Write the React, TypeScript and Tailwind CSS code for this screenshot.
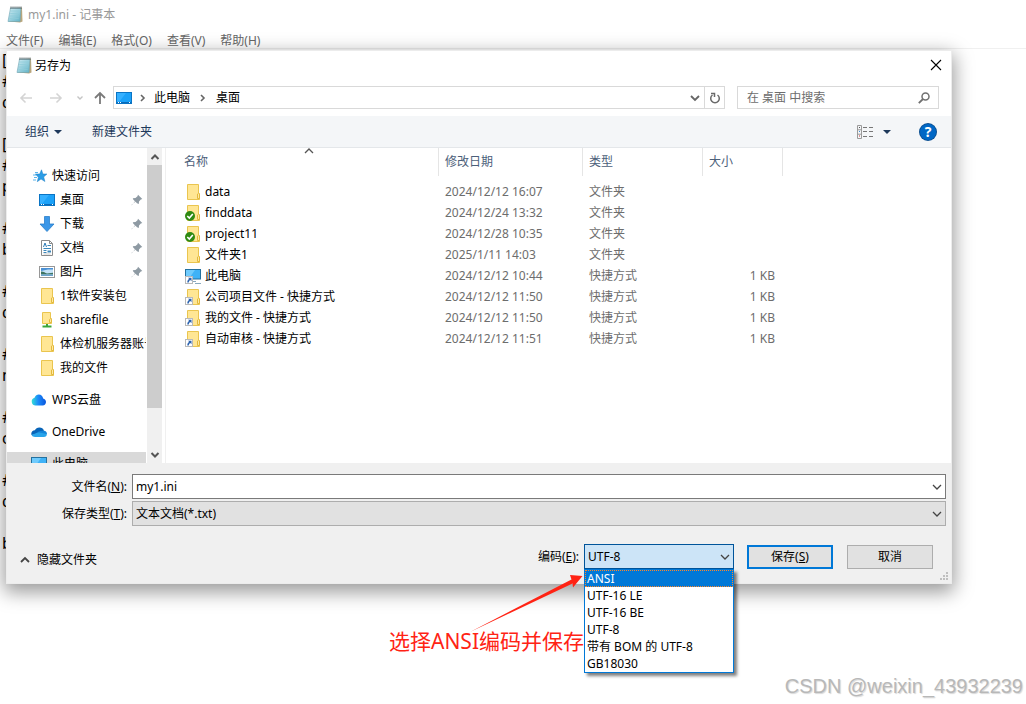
import React from "react";

type SvgProps = { children: React.ReactNode; w?: number; h?: number; className?: string };

function Svg({ children, w = 16, h = 16, className = "" }: SvgProps) {
  return (
    <svg width={w} height={h} viewBox={`0 0 ${w} ${h}`} fill="none" aria-hidden="true" className={`shrink-0 ${className}`}>
      {children}
    </svg>
  );
}

function Notepad() {
  return (
    <Svg w={16} h={17}>
      <defs>
        <linearGradient id="pad" x1="0" y1="0" x2="1" y2="1">
          <stop offset="0" stopColor="#d3eef5" />
          <stop offset="1" stopColor="#5fb2c6" />
        </linearGradient>
      </defs>
      <path d="M4 2.5 15 1.5 15.5 15.5 13 16.5 2 15.5Z" fill="#b9a67c" />
      <path d="M3.5 2H14L13 15.5H1Z" fill="url(#pad)" stroke="#6fa5b3" strokeWidth=".6" />
      <path d="M3.5 5h9M3.2 7.5h9M3 10h9M2.6 12.5h9" stroke="#8ecbd9" strokeWidth=".7" />
      <path d="M4 .5v2.500M6 .5v2.500M8 .5v2.500M10 .5v2.500M12 .5v2.500M14 .5v2.500" stroke="#4d5a5e" strokeWidth=".9" />
    </Svg>
  );
}

function FolderShape() {
  return (
    <>
      <path d="M2.500 .5h11v9h1v6h-12z" fill="#ffe694" stroke="#eac54f" />
      <path d="M12.500 14.500v-4.500l1-.8 1 .8v4.500z" fill="#ffe9a2" stroke="#e3b93d" />
    </>
  );
}

function Folder() {
  return (
    <Svg>
      <FolderShape />
    </Svg>
  );
}

function CheckedFolder() {
  return (
    <Svg>
      <FolderShape />
      <circle cx="5" cy="11" r="5" fill="#2f8a12" />
      <path d="m2.300 11 2 2 3.500-4" stroke="#fff" strokeWidth="1.600" />
    </Svg>
  );
}

function LinkBadge() {
  return (
    <>
      <rect x=".5" y="8.500" width="7" height="7" fill="#fff" stroke="#b9b9b9" />
      <path d="M3 9.800h3.500v3.500L5.300 12.100C4.200 13 3.800 13.500 3.800 14.600H2.300c0-2 .6-2.800 1.900-3.600z" fill="#2b62ae" />
    </>
  );
}

function LinkedFolder() {
  return (
    <Svg>
      <FolderShape />
      <LinkBadge />
    </Svg>
  );
}

function ScreenShape() {
  return (
    <>
      <rect x=".5" y="1.500" width="15" height="9.500" fill="#3fb2f7" stroke="#24719f" />
      <path d="M1 2h9L4 10.500H1z" fill="#6fcbfd" />
      <path d="M6 13.500h5M10 15.500h6" stroke="#8aa9bd" />
    </>
  );
}

function ThisPc() {
  return (
    <Svg>
      <ScreenShape />
    </Svg>
  );
}

function LinkedPc() {
  return (
    <Svg>
      <ScreenShape />
      <LinkBadge />
    </Svg>
  );
}

function DesktopIcon() {
  return (
    <Svg w={16} h={12}>
      <rect x=".5" y=".5" width="15" height="11" fill="#1ba1f8" stroke="#0a74c4" />
      <path d="M1 1h9L3 10H1z" fill="#35b0ff" />
      <path d="M1 10.500h14" stroke="#0a6ab8" />
      <path d="M2 10.500h1M4 10.500h1M13 10.500h1" stroke="#fff" />
    </Svg>
  );
}

function QuickAccess() {
  return (
    <Svg w={14} h={14}>
      <path d="M8.500.8 9.900 5h4l-3.200 2.900 1.200 4.600-3.900-2.500-3.700 2.700 1.100-4.500L2.300 5h4.400z" fill="#2b9de6" stroke="#1c7fc4" strokeWidth=".5" />
      <path d="M2 3.500h3M0 6h3M1 8.500h3M0 11h3" stroke="#5bb4ec" />
    </Svg>
  );
}

function Download() {
  return (
    <Svg>
      <path d="M5.500 .5h5v7.500h4.500L8 15.500 1 8h4.500z" fill="#3b97e8" stroke="#2a7fca" strokeWidth=".8" />
    </Svg>
  );
}

function DocumentIcon() {
  return (
    <Svg>
      <path d="M2.500 .5h8l3 3v12h-11z" fill="#fff" stroke="#8b8b8b" />
      <path d="M10.500 .5v3h3" stroke="#8b8b8b" />
      <path d="m4.500 7 1.500-4 1.500 4" stroke="#2d7bb5" />
      <path d="M8.500 5.500H12M4.500 8.500H12M4.500 10.500h3M4.500 12.500h3" stroke="#3b87ba" />
      <path d="M8.500 10.500H12v2H8.500z" fill="#3b87ba" />
      <path d="M4.500 14h7" stroke="#aaa" strokeWidth=".6" />
    </Svg>
  );
}

function PictureIcon() {
  return (
    <Svg w={16} h={12}>
      <rect x=".5" y=".5" width="15" height="11" fill="#fff" stroke="#979797" />
      <path d="M2 2h12v8H2z" fill="#c4e2f7" />
      <path d="M2 2h12v1.500H9L2 5z" fill="#4a90d4" />
      <path d="M2 5.500c3 0 4 1.500 6 2l6-.8V8.500H2z" fill="#3d7360" />
      <path d="M2 8.500h12V10H2z" fill="#6ba3cc" />
    </Svg>
  );
}

function ShareFolder() {
  return (
    <Svg>
      <path d="M3.500 .5h8v6h1v5h-9z" fill="#ffe694" stroke="#eac54f" />
      <path d="M10.500 10.500v-3l1-.8 1 .8v3z" fill="#ffe9a2" stroke="#e3b93d" />
      <path d="M8 12v2" stroke="#3aa63c" strokeWidth="2" />
      <path d="M3.500 14.500h9" stroke="#3aa63c" strokeWidth="2" />
    </Svg>
  );
}

function WpsCloud() {
  return (
    <Svg w={16} h={12}>
      <defs>
        <linearGradient id="wps" x1="0" y1="0" x2="1" y2="0">
          <stop offset="0" stopColor="#35e0d5" />
          <stop offset=".45" stopColor="#1b8bfa" />
          <stop offset="1" stopColor="#0a55dc" />
        </linearGradient>
      </defs>
      <path d="M5 11.500a4 4 0 0 1-1.500-7.800C4.500 1.500 6 .6 7.700.6c2.600 0 4.200 2 4.400 4 1.700.3 2.900 1.700 2.900 3.400s-1.400 3.500-3.300 3.500z" fill="url(#wps)" />
    </Svg>
  );
}

function OneDrive() {
  return (
    <Svg w={16} h={12}>
      <path d="M3.800 4.300A5 5 0 0 1 13 4.600L9 8 .5 9C-.4 6.600 1.400 4.400 3.800 4.300z" fill="#0864b8" />
      <path d="M13 4.700c1.800.2 3 1.500 3 3.200L10 9 7 5.800c2-.9 4-1.300 6-1.100z" fill="#1484d8" />
      <path d="M.6 9 7.200 6.200 15.900 8c0 1.900-1.300 3-3 3H4C2.400 11 1 10.200.6 9z" fill="#28a4ea" />
    </Svg>
  );
}

function Pin() {
  return (
    <Svg w={12} h={12}>
      <path d="m7 .8 4.300 4.300-1.500.4-1.800 2L7.800 10 6 9.300 4 7.300.8 11.300.4 11l4-3.200L2.200 5.600 1.800 4.200l2.700-.3 2-1.700z" fill="#8e9aa3" />
    </Svg>
  );
}

function Chevron({ dir = "down", className = "" }: { dir?: "down" | "up" | "right"; className?: string }) {
  const d = dir === "down" ? "m1 3 4 4 4-4" : dir === "up" ? "m1 7 4-4 4 4" : "m3 2 3 3-3 3";
  return (
    <Svg w={10} h={10} className={className}>
      <path d={d} stroke="currentColor" strokeWidth={dir === "right" ? 1.6 : 1.3} />
    </Svg>
  );
}

function Caret({ className = "" }: { className?: string }) {
  return (
    <Svg w={8} h={4} className={className}>
      <path d="M0 0h8L4 4z" fill="#1e395b" />
    </Svg>
  );
}

type Place = { name: string; icon: React.ReactNode; pinned?: boolean };

const places: Place[] = [
  { name: "桌面", icon: <DesktopIcon />, pinned: true },
  { name: "下载", icon: <Download />, pinned: true },
  { name: "文档", icon: <DocumentIcon />, pinned: true },
  { name: "图片", icon: <PictureIcon />, pinned: true },
  { name: "1软件安装包", icon: <Folder /> },
  { name: "sharefile", icon: <ShareFolder /> },
  { name: "体检机服务器账号", icon: <Folder /> },
  { name: "我的文件", icon: <Folder /> },
];

const files = [
  { name: "data", date: "2024/12/12 16:07", type: "文件夹", size: "", icon: <Folder /> },
  { name: "finddata", date: "2024/12/24 13:32", type: "文件夹", size: "", icon: <CheckedFolder /> },
  { name: "project11", date: "2024/12/28 10:35", type: "文件夹", size: "", icon: <CheckedFolder /> },
  { name: "文件夹1", date: "2025/1/11 14:03", type: "文件夹", size: "", icon: <Folder /> },
  { name: "此电脑", date: "2024/12/12 10:44", type: "快捷方式", size: "1 KB", icon: <LinkedPc /> },
  { name: "公司项目文件 - 快捷方式", date: "2024/12/12 11:50", type: "快捷方式", size: "1 KB", icon: <LinkedFolder /> },
  { name: "我的文件 - 快捷方式", date: "2024/12/12 11:50", type: "快捷方式", size: "1 KB", icon: <LinkedFolder /> },
  { name: "自动审核 - 快捷方式", date: "2024/12/12 11:51", type: "快捷方式", size: "1 KB", icon: <LinkedFolder /> },
];

const encodings = ["ANSI", "UTF-16 LE", "UTF-16 BE", "UTF-8", "带有 BOM 的 UTF-8", "GB18030"];
const menus = ["文件(F)", "编辑(E)", "格式(O)", "查看(V)", "帮助(H)"];
const editorText = "[\n#\nd\n\n[\n#\np\n\n#\nb\n\n#\nd\n\n#\nm\n\n#\nc\n\n#\nd\n\nb";

function AddressBar() {
  return (
    <div className="flex h-[23px] items-center px-3 text-[#7a7a7a]">
      <button type="button" aria-label="后退" className="flex w-7 text-[#d4d4d4]">
        <Svg w={14} h={12}>
          <path d="M13 6H2M6.500 1.500 2 6l4.500 4.500" stroke="currentColor" strokeWidth="1.600" />
        </Svg>
      </button>
      <button type="button" aria-label="前进" className="flex w-7 text-[#d4d4d4]">
        <Svg w={16} h={12}>
          <path d="M3 6h11M9.500 1.500 14 6l-4.500 4.500" stroke="currentColor" strokeWidth="1.600" />
        </Svg>
      </button>
      <button type="button" aria-label="最近浏览的位置" className="flex w-[19px] text-[#c4c4c4]">
        <Svg w={10} h={10}>
          <path d="m2.500 3.500 2.500 2.500 2.500-2.500" stroke="currentColor" strokeWidth="1.400" />
        </Svg>
      </button>
      <button type="button" aria-label="上移一级" className="flex w-[19px]">
        <Svg w={12} h={14}>
          <path d="M6 13V2M1 7l5-5 5 5" stroke="currentColor" strokeWidth="1.800" />
        </Svg>
      </button>
      <div className="flex h-full flex-1 items-center border border-[#d9d9d9] text-black">
        <div className="flex flex-1 items-center pl-0.5">
          <DesktopIcon />
          <Chevron dir="right" className="ml-1.5 text-[#666]" />
          <button type="button" className="ml-1.5">此电脑</button>
          <Chevron dir="right" className="ml-2 text-[#666]" />
          <button type="button" className="ml-2">桌面</button>
        </div>
        <button type="button" aria-label="以前的位置" className="flex w-[18px] items-center justify-center text-[#666]">
          <Svg w={10} h={10}>
            <path d="m1 3 4 4 4-4" stroke="currentColor" strokeWidth="1.800" />
          </Svg>
        </button>
        <button type="button" aria-label="刷新" className="flex h-full w-5 items-center justify-center border-l border-[#d9d9d9] text-[#6a6a6a]">
          <Svg w={12} h={12}>
            <path d="M3.500 3a4.300 4.300 0 1 0 5 0" stroke="currentColor" strokeWidth="1.500" />
            <path d="M2 1.500h3.500V5" stroke="currentColor" strokeWidth="1.500" />
          </Svg>
        </button>
      </div>
      <label className="ml-3 flex h-full w-[202px] items-center border border-[#d9d9d9] pr-2 pl-[9px]">
        <input
          type="search"
          aria-label="在 桌面 中搜索"
          placeholder="在 桌面 中搜索"
          className="w-full min-w-0 flex-1 bg-transparent outline-none placeholder:text-[#6d6d6d]"
        />
        <Svg w={12} h={12}>
          <circle cx="7.500" cy="4.500" r="3.500" stroke="#707070" strokeWidth="1.500" />
          <path d="M5 7 .8 11.200" stroke="#707070" strokeWidth="1.800" />
        </Svg>
      </label>
    </div>
  );
}

function Toolbar() {
  return (
    <div className="mt-[7px] flex h-8 items-center border-b border-[#e4e7ea] bg-[#f4f6f8] pr-[15px] pl-[18px] text-[#1e395b]">
      <button type="button" className="flex items-center gap-[5px]">
        组织
        <Caret />
      </button>
      <button type="button" className="ml-[30px]">新建文件夹</button>
      <button type="button" aria-label="更改视图" className="ml-auto flex items-center gap-2.5">
        <Svg w={16} h={14}>
          <path d="M.5 .5h4v13h-4zM.5 4.800h4M.5 9.200h4" stroke="#9a9a9a" />
          <path d="M2 2.500h1" stroke="#555" />
          <path d="M2 6.500h1" stroke="#3b8edb" />
          <path d="M2 11h1" stroke="#c33" />
          <path d="M6 2.500h4M12 2.500h4M6 6.500h4M12 6.500h4M6 11.500h4M12 11.500h4" stroke="#777" />
        </Svg>
        <Caret />
      </button>
      <button type="button" aria-label="帮助" className="ml-[29px] flex size-4 items-center justify-center rounded-full bg-[#0067c5] text-[14px] leading-4 font-bold text-white ring-1 ring-[#0a4f92]">
        ?
      </button>
    </div>
  );
}

function Sidebar() {
  return (
    <div className="flex h-[315px] w-[156px] shrink-0">
      <nav aria-label="导航窗格" className="w-[139px] shrink-0 overflow-hidden pt-4 whitespace-nowrap">
        <a href="#quick" className="flex h-6 items-center gap-[5px] pl-[26px]">
          <QuickAccess />
          快速访问
        </a>
        {places.map((p) => (
          <a key={p.name} href="#place" className="flex h-6 items-center pr-[3px] pl-8">
            {p.icon}
            <span className="ml-[5px] flex-1">{p.name}</span>
            {p.pinned && <Pin />}
          </a>
        ))}
        <a href="#wps" className="mt-2 flex h-6 items-center gap-[5px] pl-6">
          <WpsCloud />
          WPS云盘
        </a>
        <a href="#onedrive" className="mt-2 flex h-6 items-center gap-[5px] pl-6">
          <OneDrive />
          OneDrive
        </a>
        <a href="#pc" className="mt-2 flex h-6 items-center gap-[5px] bg-[#d9d9d9] pl-6">
          <ThisPc />
          此电脑
        </a>
      </nav>
      <div aria-hidden="true" className="ml-px flex w-[15px] flex-col items-center bg-[#f0f0f0] text-[#555]">
        <Svg w={10} h={17}>
          <path d="m1.500 11 3.500-3.500L8.500 11" stroke="currentColor" strokeWidth="2" />
        </Svg>
        <div className="h-[243px] w-full bg-[#cdcdcd]" />
        <Svg w={10} h={17} className="mt-auto">
          <path d="m1.500 7 3.500 3.500L8.500 7" stroke="currentColor" strokeWidth="2" />
        </Svg>
      </div>
    </div>
  );
}

function FileList() {
  return (
    <div className="relative ml-0.5 min-w-0 flex-1 border-l border-[#f0f0f0]">
      <Chevron dir="up" className="absolute -top-0.5 left-[138px] text-[#555]" />
      <table className="w-full table-fixed border-collapse">
        <colgroup>
          <col className="w-[273px]" />
          <col className="w-36" />
          <col className="w-[120px]" />
          <col className="w-20" />
          <col />
        </colgroup>
        <thead>
          <tr className="text-left text-[#4c607a]">
            <th className="h-[33px] p-0 align-top font-normal">
              <div className="h-7 border-r border-[#e5e5e5] pl-[18px] leading-7">名称</div>
            </th>
            {["修改日期", "类型", "大小"].map((h) => (
              <th key={h} className="h-[33px] p-0 align-top font-normal">
                <div className="h-7 border-r border-[#e5e5e5] pl-1.5 leading-7">{h}</div>
              </th>
            ))}
            <td />
          </tr>
        </thead>
        <tbody>
          {files.map((f) => (
            <tr key={f.name} className="text-[#6d6d6d]">
              <td className="h-[21px] p-0">
                <div className="flex items-center gap-1 pl-[19px] text-black">
                  {f.icon}
                  {f.name}
                </div>
              </td>
              <td className="p-0 pl-1.5">{f.date}</td>
              <td className="p-0 pl-1.5">{f.type}</td>
              <td className="p-0 pr-2 text-right">{f.size}</td>
              <td />
            </tr>
          ))}
        </tbody>
      </table>
    </div>
  );
}

function Annotation() {
  return (
    <div className="pointer-events-none absolute top-[30px] right-full flex flex-col items-end text-[21px] leading-7 whitespace-nowrap text-[#ff2314]">
      <svg width="114" height="58" viewBox="0 0 114 58" aria-hidden="true" className="-mb-[5px] shrink-0">
        <path d="M0 58 101.500 5.500 100 1 112.500 2 103 13.500 102.500 9.500Z" fill="#ff2314" />
      </svg>
      <span>选择ANSI编码并保存</span>
    </div>
  );
}

function Footer() {
  return (
    <div className="relative bg-[#f0f0f0] pt-[11px] pr-[5px] pb-3.5">
      <div className="grid grid-cols-[125px_1fr] gap-y-0.5">
        <label htmlFor="file-name" className="pr-[5px] text-right leading-[25px]">
          文件名(<u>N</u>):
        </label>
        <div className="relative">
          <input
            id="file-name"
            type="text"
            defaultValue="my1.ini"
            className="block h-[25px] w-full border border-[#7a7a7a] bg-white pr-5 pl-[3px] outline-none"
          />
          <Chevron className="pointer-events-none absolute top-2 right-1 text-[#444]" />
        </div>
        <label htmlFor="file-type" className="pr-[5px] text-right leading-[25px]">
          保存类型(<u>T</u>):
        </label>
        <div className="relative">
          <select id="file-type" className="block h-[25px] w-full appearance-none border border-[#adadad] bg-[#e1e1e1] pr-5 pl-[3px] outline-none">
            <option>文本文档(*.txt)</option>
          </select>
          <Chevron className="pointer-events-none absolute top-2 right-1 text-[#444]" />
        </div>
      </div>
      <div className="mt-[18px] flex items-center pr-[13px]">
        <button type="button" className="mt-1.5 mr-auto ml-[13px] flex items-center gap-[7px]">
          <Svg w={10} h={10}>
            <path d="m1 7 4-4 4 4" stroke="#444" strokeWidth="1.800" />
          </Svg>
          隐藏文件夹
        </button>
        <label htmlFor="encoding" className="pr-[5px]">
          编码(<u>E</u>):
        </label>
        <div className="relative w-[150px]">
          <select
            id="encoding"
            defaultValue="UTF-8"
            className="block h-[25px] w-full appearance-none border border-[#00549a] bg-[#cce4f7] pl-[3px] outline-none"
          >
            {encodings.map((e) => (
              <option key={e}>{e}</option>
            ))}
          </select>
          <Chevron className="pointer-events-none absolute top-2 right-1 text-[#444]" />
          <ul
            role="listbox"
            aria-label="编码"
            className="absolute top-full left-0 z-10 w-full border border-[#0078d7] bg-white leading-[17px] shadow-[3px_3px_3px_rgba(0,0,0,0.5)]"
          >
            {encodings.map((e, i) => (
              <li
                key={e}
                role="option"
                aria-selected={i === 0}
                className={i === 0 ? "bg-[#0078d7] pl-0.5 text-white outline-1 -outline-offset-1 outline-[#ff8728] outline-dotted" : "pl-0.5"}
              >
                {e}
              </li>
            ))}
          </ul>
          <Annotation />
        </div>
        <button type="button" className="ml-[13px] h-6 w-[86px] border-2 border-[#0078d7] bg-[#e1e1e1]">
          保存(<u>S</u>)
        </button>
        <button type="button" className="ml-3.5 h-6 w-[86px] border border-[#adadad] bg-[#e1e1e1]">
          取消
        </button>
      </div>
      <Svg w={8} h={8} className="absolute right-[3px] bottom-[3px]">
        <path d="M6 0h2v2H6zM3 3h2v2H3zM6 3h2v2H6zM0 6h2v2H0zM3 6h2v2H3zM6 6h2v2H6z" fill="#bfbfbf" />
      </Svg>
    </div>
  );
}

function SaveDialog() {
  return (
    <section
      role="dialog"
      aria-label="另存为"
      className="absolute top-[50px] right-[74px] left-1.5 border border-[#ececec] bg-white text-black shadow-[0_6px_18px_2px_rgba(0,0,0,0.4)]"
    >
      <header className="flex h-[35px] items-start pt-1.5 pr-[9px] pl-[9px]">
        <Notepad />
        <h1 className="ml-[3px] leading-[18px]">另存为</h1>
        <button type="button" aria-label="关闭" className="mt-0.5 ml-auto flex">
          <Svg w={12} h={12}>
            <path d="m1 1 10 10M11 1 1 11" stroke="#000" strokeWidth="1.100" />
          </Svg>
        </button>
      </header>
      <AddressBar />
      <Toolbar />
      <div className="flex">
        <Sidebar />
        <FileList />
      </div>
      <Footer />
    </section>
  );
}

export default function App() {
  return (
    <main className="relative flex min-h-screen flex-col overflow-hidden bg-white font-['Noto_Sans','Noto_Sans_CJK_SC',sans-serif] text-[12px] leading-4">
      <div className="flex h-[29px] items-center gap-[5px] pl-[7px] text-[#999]">
        <Notepad />
        <span>my1.ini - 记事本</span>
      </div>
      <div role="menubar" aria-label="菜单栏" className="flex h-5 items-center gap-[15px] border-b border-[#f0f0f0] pt-1 pl-1.5 text-[#666]">
        {menus.map((m) => (
          <button key={m} type="button" role="menuitem">
            {m}
          </button>
        ))}
      </div>
      <textarea
        aria-label="文本编辑器"
        defaultValue={editorText}
        className="block w-full flex-1 resize-none overflow-hidden px-0.5 pt-px text-[16px] leading-[21px] text-black outline-none"
      />
      <SaveDialog />
      <div className="absolute right-[3px] bottom-[6px] font-['Liberation_Sans',sans-serif] text-[20px] leading-6 text-[#b8b8b8] [text-shadow:1px_1px_1px_#d8d8d8]">
        CSDN @weixin_43932239
      </div>
    </main>
  );
}
